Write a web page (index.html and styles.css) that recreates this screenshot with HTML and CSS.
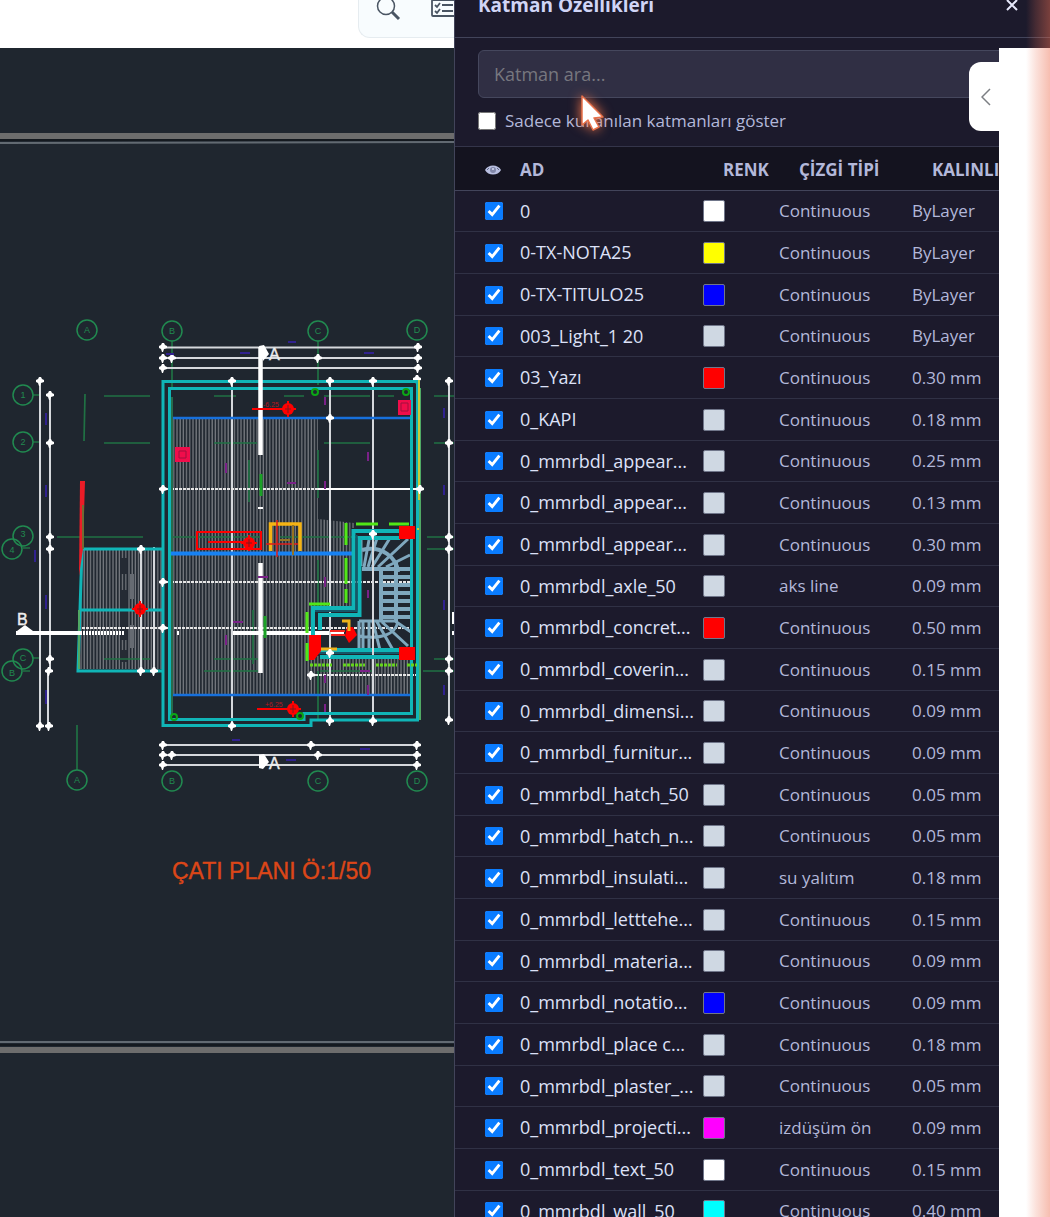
FILE: index.html
```html
<!DOCTYPE html>
<html lang="tr">
<head>
<meta charset="utf-8">
<meta name="viewport" content="width=device-width, initial-scale=1">
<title>Katman Özellikleri</title>
<link rel="stylesheet" href="styles.css">
</head>
<body>
<div class="app">
  <main class="workspace">
    <header class="toolbar">
      <div class="toolbar-group">
        <button class="tool" type="button" aria-label="Ara">
          <svg width="26" height="26" viewBox="0 0 26 26" fill="none" stroke="#4a5563" stroke-width="2"><circle cx="10" cy="9" r="8.5" stroke-width="1.5"/><path d="M16 15l7 7" stroke-width="3"/></svg>
        </button>
        <button class="tool" type="button" aria-label="Katman listesi">
          <svg width="26" height="26" viewBox="0 0 26 26" fill="none" stroke="#4a5563" stroke-width="1.8"><rect x="2" y="3" width="24" height="16" rx="1"/><path d="M5 8l2 2 3-4M12 8h11M5 14l2 2 3-4M12 14h11"/></svg>
        </button>
      </div>
    </header>
    <div class="canvas">
      <svg class="drawing" viewBox="0 48 454 1169" preserveAspectRatio="xMinYMin slice" role="img" aria-label="Çatı planı">
        <defs>
          <pattern id="hatch" width="3.2" height="8" patternUnits="userSpaceOnUse"><path d="M1 0V8" stroke="#777b80" stroke-width="1.3"/></pattern>
          <path id="tick" d="M-4 -1l2-1 1-2h2l1 2 2 1v2l-3 1-1 3h-1l-1-3-2-1z" fill="#fff"/>
          <g id="level"><circle r="6" fill="#f00"/><path d="M-8 0H8M0-8V8" stroke="#f00" stroke-width="2"/><path d="M-3 0H3M0-4V4" stroke="#7b1a20"/></g>
        </defs>

        <!-- sheet frame -->
        <path d="M0 136H454M0 1050H454" stroke="#6d6d6d" stroke-width="6"/>
        <path d="M0 140H454M0 1045H454" stroke="#14191f" stroke-width="2"/>
        <path d="M0 143L454 142M0 1042H454" stroke="#626a72" stroke-width="2"/>

        <!-- hatching -->
        <path d="M171 419H318V519L354 523V553H411V695H171zM82 550H162V669H80z" fill="url(#hatch)"/>
        <path d="M352 528H412V656H312V608H352z" fill="#1f262f"/>
        <path d="M124 558v16M124 590v50M124 650v12" stroke="#252b34" stroke-width="7"/>
        <path d="M132 574v25M132 625v23" stroke="#666b72" stroke-width="4"/>

        <!-- grid axes -->
        <g stroke="#207144" stroke-width="1.7" fill="none">
          <path d="M33 395h6M33 442h6M23 548h7M33 658h6M23 671h7"/>
          <path d="M104 396h46M104 443h46M57 537h86M104 659h46M214 396h22M214 443h43M284 396h20M324 396h46M378 396h16M324 443h46M434 396h20M434 443h20M427 537h27M427 549h27M434 659h20M423 671h31M172 537h88M280 537h80M204 671h46M214 659h44M320 671h52"/>
          <path d="M85 394l-1 47M77 725v45M172 341v46M318 341v44M172 470v100M249 460v42M318 450v48M318 560v48M172 671v45M318 671v48M253 610v54M248 671h10"/>
        </g>
        <g stroke="#218a50" stroke-width="1.5" fill="none">
          <circle cx="87" cy="330" r="10"/><circle cx="172" cy="331" r="10"/><circle cx="318" cy="331" r="10"/><circle cx="417" cy="330" r="10"/>
          <circle cx="23" cy="395" r="10"/><circle cx="23" cy="442" r="10"/><circle cx="23" cy="536" r="10"/><circle cx="12" cy="549" r="10"/><circle cx="23" cy="659" r="10"/><circle cx="12" cy="671" r="10"/>
          <circle cx="77" cy="780" r="10"/><circle cx="172" cy="781" r="10"/><circle cx="318" cy="781" r="10"/><circle cx="417" cy="781" r="10"/>
        </g>
        <g class="axis-name">
          <text x="87" y="333">A</text><text x="172" y="334">B</text><text x="318" y="334">C</text><text x="417" y="333">D</text>
          <text x="23" y="398">1</text><text x="23" y="445">2</text><text x="23" y="537">3</text><text x="12" y="553">4</text><text x="23" y="661">C</text><text x="12" y="676">B</text>
          <text x="77" y="783">A</text><text x="172" y="784">B</text><text x="318" y="784">C</text><text x="417" y="784">D</text>
        </g>

        <!-- dimension chains -->
        <g stroke="#d5d8dc" stroke-width="2" fill="none">
          <path d="M162 347.500H420M162 358H420M162 368H420M162 745H420M162 755H420M162 765H420"/>
          <path d="M40 381V727M50 395V671M48 671V727M449 381V720"/>
          <path d="M232 381V726M330 381V722M373 381V722M141 547V672M154 547V672"/>
        </g>
        <path d="M163 489H318M163 582H411M78 628H411M311 675H420" stroke="#e6e6e6" stroke-width="2" stroke-dasharray="3 1"/>
        <path d="M318 489H420" stroke="#fff" stroke-width="2"/>
        <g>
          <use href="#tick" x="163" y="347"/><use href="#tick" x="163" y="358"/><use href="#tick" x="172" y="358"/><use href="#tick" x="163" y="368"/>
          <use href="#tick" x="418" y="347"/><use href="#tick" x="418" y="358"/><use href="#tick" x="418" y="368"/><use href="#tick" x="318" y="358"/><use href="#tick" x="417" y="379"/>
          <use href="#tick" x="163" y="745"/><use href="#tick" x="163" y="755"/><use href="#tick" x="172" y="755"/><use href="#tick" x="163" y="765"/>
          <use href="#tick" x="311" y="745"/><use href="#tick" x="318" y="755"/><use href="#tick" x="417" y="745"/><use href="#tick" x="417" y="755"/><use href="#tick" x="417" y="765"/>
          <use href="#tick" x="40" y="381"/><use href="#tick" x="50" y="395"/><use href="#tick" x="50" y="443"/><use href="#tick" x="50" y="537"/><use href="#tick" x="50" y="549"/><use href="#tick" x="50" y="659"/><use href="#tick" x="49" y="671"/><use href="#tick" x="40" y="726"/><use href="#tick" x="49" y="726"/>
          <use href="#tick" x="449" y="381"/><use href="#tick" x="449" y="443"/><use href="#tick" x="449" y="537"/><use href="#tick" x="449" y="549"/><use href="#tick" x="449" y="659"/><use href="#tick" x="449" y="671"/><use href="#tick" x="449" y="720"/>
        </g>
        <g stroke="#30218f" stroke-width="2"><path d="M46 413v12M46 485v12M46 595v14M46 690v14M35 550v12M444 408v10M444 485v10M444 600v10M444 685v10M240 353h10M288 342h8M364 353h10M166 354h8M232 740h8M286 760h10M360 749h10"/></g>

        <!-- roof ridges -->
        <path d="M171 418H411M171 695H411" stroke="#1770dc" stroke-width="2.500"/>
        <path d="M171 553.500H352" stroke="#1682f4" stroke-width="4"/>

        <!-- walls -->
        <g fill="none" stroke="#10b5b7" stroke-width="3">
          <path d="M163 381.500H417.500V720H311V725.500H163z"/>
          <path d="M169.500 388.500H411.500V713.500H304V719.500H169.500z"/>
          <path d="M162 549H82L78 671H162M81 610H162"/>
        </g>
        <path d="M172 397V550M172 560V716" stroke="#276b4c" stroke-width="2"/>
        <path d="M79 610V669M420 388V720" stroke="#50a965" stroke-width="2"/>
        <path d="M419 380V500M418 528V578M418 608V660" stroke="#c9ca38" stroke-width="2"/>
        <path d="M80 481h5l-2 68-4 27z" fill="#ea1c27"/>
        <path d="M83 505V549" stroke="#716a33" stroke-width="2"/>

        <!-- section marks -->
        <path d="M260.500 347V455M260.500 563V673" stroke="#fff" stroke-width="4.500"/>
        <path d="M16 633H80M233 633H344" stroke="#fff" stroke-width="4"/>
        <path d="M80 633H125" stroke="#fff" stroke-width="4" stroke-dasharray="2 1"/>
        <path d="M258 508h5M178 631v4M453 612v12M453 631v4" stroke="#fff" stroke-width="2"/>
        <path d="M259 346l5-1 5 9-6 7zM259 755l5-1 5 8-6 7-4-1zM17 631l8-6 8 6z" fill="#fff"/>
        <g class="section-name"><text x="269" y="360">A</text><text x="269" y="769">A</text><text x="17" y="625">B</text></g>
        <path d="M261 474v22M265 616v22" stroke="#1ba126" stroke-width="3"/>

        <!-- annotations -->
        <g stroke="#7a2188" stroke-width="2"><path d="M226 463v10M325 397v8M368 452v9M287 483h9M325 481v8M258 577h10M325 577v10M368 590v8M233 622h10M226 635v10M325 675v8M325 704v8M368 685v10M360 671h10M383 577h9"/></g>
        <g fill="none" stroke="#f00" stroke-width="2">
          <path d="M252 409H282M257 709H293M197 532H261V549H197zM208 542H250M134 608H145"/>
        </g>
        <use href="#level" x="288" y="409"/><use href="#level" x="293" y="709"/><use href="#level" x="249" y="543"/><use href="#level" x="140" y="609"/>
        <g class="level-name"><text x="263" y="407">-6.25</text><text x="265" y="707">+6.25</text></g>
        <path d="M175 447h15v15h-15zM398 400h13v15h-13z" fill="#f00d4b"/>
        <path d="M179 451h7v7h-7zM401 403h7v8h-7z" fill="none" stroke="#a0103f"/>
        <path d="M270.500 551V524H300V551" stroke="#f5b313" stroke-width="3.500" fill="none"/>
        <path d="M277 520V557M266 544H298" stroke="#e11d18" stroke-width="1.500"/>
        <path d="M280 540h10M293 525v30" stroke="#967322" stroke-width="2"/>
        <g fill="none" stroke="#0ba615" stroke-width="2"><circle cx="315" cy="392" r="3"/><circle cx="406" cy="392" r="3"/><circle cx="174" cy="717" r="3"/><circle cx="300" cy="716" r="3"/></g>

        <!-- staircase -->
        <g stroke="#7fa8be" stroke-width="4" fill="none">
          <path d="M362 569H410M381 569V620M396 562V622M362 550C382 545 397 558 398 572M381 577H410M381 585H410M381 593H410M381 601H410M381 609H410M381 617H410"/>
          <path d="M364 567L369 540M368 567L377 538M372 567L390 538M378 567L408 539M386 567L410 555M361 540V566" stroke-width="3"/>
          <path d="M359 621H395L411 632M359 621V650M363 622V650M369 622V650M373 622L380 650M377 622L393 650M382 622L408 646M359 636C382 640 395 634 398 622" stroke-width="3"/>
        </g>
        <g fill="none" stroke="#10b5b7">
          <path d="M400 531H353.500V608H313V640M400 538H359.500V615H320V630" stroke-width="4"/>
          <path d="M315 650H404M320 657H404" stroke-width="4"/>
          <path d="M356.500 535V611M315 611H357M316 653H400" stroke="#155769" stroke-width="2"/>
          <path d="M411.500 530V660M417.500 530V660" stroke-width="3"/>
        </g>
        <path d="M373 530V655M330 628V655" stroke="#d5d8dc" stroke-width="2"/>
        <path d="M346 523V545M346 558V584M346 589V603M356 524H378M389 524H409M309 604H330M307 612V633M307 643V661" stroke="#51e717" stroke-width="3"/>
        <path d="M310 665H332M343 665H365M376 665H397M407 665H417" stroke="#65d51c" stroke-width="3" stroke-dasharray="3 1"/>
        <path d="M399 526h16v13h-16zM399 647h16v13h-16zM309 635h12v16l-7 9h-5zM347 627h6l4 8-8 8-4-7z" fill="#f00"/>
        <path d="M330 631H345M331 635H345" stroke="#f42620" stroke-width="2"/>
        <path d="M342 621h7v10M321 649h16" stroke="#edb21b" stroke-width="3" fill="none"/>
        <g><use href="#tick" x="232" y="381"/><use href="#tick" x="330" y="381"/><use href="#tick" x="373" y="381"/><use href="#tick" x="163" y="489"/><use href="#tick" x="420" y="489"/><use href="#tick" x="330" y="418"/><use href="#tick" x="163" y="582"/><use href="#tick" x="163" y="628"/><use href="#tick" x="232" y="726"/><use href="#tick" x="330" y="721"/><use href="#tick" x="373" y="721"/><use href="#tick" x="373" y="534"/><use href="#tick" x="330" y="653"/><use href="#tick" x="311" y="675"/><use href="#tick" x="141" y="549"/><use href="#tick" x="141" y="671"/><use href="#tick" x="154" y="671"/></g>

        <text class="plan-title" x="172" y="879">ÇATI PLANI Ö:1/50</text>
      </svg>
    </div>
  </main>

  <aside class="panel">
    <header class="panel-header">
      <h2>Katman Özellikleri</h2>
      <button class="close" type="button" aria-label="Kapat"><svg width="12" height="12" viewBox="0 0 12 12" stroke="#e6e8fb" stroke-width="2"><path d="M1 1l10 10M11 1L1 11"/></svg></button>
    </header>
    <div class="filters">
      <input class="search" type="text" placeholder="Katman ara..." aria-label="Katman ara">
      <label class="only-used"><input type="checkbox">Sadece kullanılan katmanları göster</label>
    </div>
    <table class="layers">
      <colgroup><col class="c-visible"><col class="c-name"><col class="c-color"><col class="c-type"><col class="c-weight"></colgroup>
      <thead><tr>
        <th scope="col"><svg class="eye" width="16" height="10" viewBox="0 0 16 10" role="img" aria-label="Görünür"><path d="M0 5C3-1 13-1 16 5 13 11 3 11 0 5z" fill="#b9bfe0"/><circle cx="8" cy="5" r="3" fill="#8187a8"/><circle cx="8" cy="4" r="1" fill="#d8dcf4"/><path d="M2 5l2-2M14 5l-2-2" stroke="#62678a"/></svg></th>
        <th scope="col">AD</th><th scope="col" class="inset">RENK</th><th scope="col" class="inset">ÇİZGİ TİPİ</th><th scope="col" class="inset">KALINLIK</th>
      </tr></thead>
      <tbody>
        <tr><td><input type="checkbox" id="l1" checked></td><td><label for="l1">0</label></td><td><span class="swatch white"></span></td><td>Continuous</td><td>ByLayer</td></tr>
        <tr><td><input type="checkbox" id="l2" checked></td><td><label for="l2">0-TX-NOTA25</label></td><td><span class="swatch yellow"></span></td><td>Continuous</td><td>ByLayer</td></tr>
        <tr><td><input type="checkbox" id="l3" checked></td><td><label for="l3">0-TX-TITULO25</label></td><td><span class="swatch blue"></span></td><td>Continuous</td><td>ByLayer</td></tr>
        <tr><td><input type="checkbox" id="l4" checked></td><td><label for="l4">003_Light_1 20</label></td><td><span class="swatch"></span></td><td>Continuous</td><td>ByLayer</td></tr>
        <tr><td><input type="checkbox" id="l5" checked></td><td><label for="l5">03_Yazı</label></td><td><span class="swatch red"></span></td><td>Continuous</td><td>0.30 mm</td></tr>
        <tr><td><input type="checkbox" id="l6" checked></td><td><label for="l6">0_KAPI</label></td><td><span class="swatch"></span></td><td>Continuous</td><td>0.18 mm</td></tr>
        <tr><td><input type="checkbox" id="l7" checked></td><td><label for="l7">0_mmrbdl_appear...</label></td><td><span class="swatch"></span></td><td>Continuous</td><td>0.25 mm</td></tr>
        <tr><td><input type="checkbox" id="l8" checked></td><td><label for="l8">0_mmrbdl_appear...</label></td><td><span class="swatch"></span></td><td>Continuous</td><td>0.13 mm</td></tr>
        <tr><td><input type="checkbox" id="l9" checked></td><td><label for="l9">0_mmrbdl_appear...</label></td><td><span class="swatch"></span></td><td>Continuous</td><td>0.30 mm</td></tr>
        <tr><td><input type="checkbox" id="l10" checked></td><td><label for="l10">0_mmrbdl_axle_50</label></td><td><span class="swatch"></span></td><td>aks line</td><td>0.09 mm</td></tr>
        <tr><td><input type="checkbox" id="l11" checked></td><td><label for="l11">0_mmrbdl_concret...</label></td><td><span class="swatch red"></span></td><td>Continuous</td><td>0.50 mm</td></tr>
        <tr><td><input type="checkbox" id="l12" checked></td><td><label for="l12">0_mmrbdl_coverin...</label></td><td><span class="swatch"></span></td><td>Continuous</td><td>0.15 mm</td></tr>
        <tr><td><input type="checkbox" id="l13" checked></td><td><label for="l13">0_mmrbdl_dimensi...</label></td><td><span class="swatch"></span></td><td>Continuous</td><td>0.09 mm</td></tr>
        <tr><td><input type="checkbox" id="l14" checked></td><td><label for="l14">0_mmrbdl_furnitur...</label></td><td><span class="swatch"></span></td><td>Continuous</td><td>0.09 mm</td></tr>
        <tr><td><input type="checkbox" id="l15" checked></td><td><label for="l15">0_mmrbdl_hatch_50</label></td><td><span class="swatch"></span></td><td>Continuous</td><td>0.05 mm</td></tr>
        <tr><td><input type="checkbox" id="l16" checked></td><td><label for="l16">0_mmrbdl_hatch_n...</label></td><td><span class="swatch"></span></td><td>Continuous</td><td>0.05 mm</td></tr>
        <tr><td><input type="checkbox" id="l17" checked></td><td><label for="l17">0_mmrbdl_insulati...</label></td><td><span class="swatch"></span></td><td>su yalıtım</td><td>0.18 mm</td></tr>
        <tr><td><input type="checkbox" id="l18" checked></td><td><label for="l18">0_mmrbdl_letttehe...</label></td><td><span class="swatch"></span></td><td>Continuous</td><td>0.15 mm</td></tr>
        <tr><td><input type="checkbox" id="l19" checked></td><td><label for="l19">0_mmrbdl_materia...</label></td><td><span class="swatch"></span></td><td>Continuous</td><td>0.09 mm</td></tr>
        <tr><td><input type="checkbox" id="l20" checked></td><td><label for="l20">0_mmrbdl_notatio...</label></td><td><span class="swatch blue"></span></td><td>Continuous</td><td>0.09 mm</td></tr>
        <tr><td><input type="checkbox" id="l21" checked></td><td><label for="l21">0_mmrbdl_place c...</label></td><td><span class="swatch"></span></td><td>Continuous</td><td>0.18 mm</td></tr>
        <tr><td><input type="checkbox" id="l22" checked></td><td><label for="l22">0_mmrbdl_plaster_...</label></td><td><span class="swatch"></span></td><td>Continuous</td><td>0.05 mm</td></tr>
        <tr><td><input type="checkbox" id="l23" checked></td><td><label for="l23">0_mmrbdl_projecti...</label></td><td><span class="swatch magenta"></span></td><td>izdüşüm ön</td><td>0.09 mm</td></tr>
        <tr><td><input type="checkbox" id="l24" checked></td><td><label for="l24">0_mmrbdl_text_50</label></td><td><span class="swatch white"></span></td><td>Continuous</td><td>0.15 mm</td></tr>
        <tr><td><input type="checkbox" id="l25" checked></td><td><label for="l25">0_mmrbdl_wall_50</label></td><td><span class="swatch cyan"></span></td><td>Continuous</td><td>0.40 mm</td></tr>
      </tbody>
    </table>
    <svg class="cursor" width="36" height="44" viewBox="0 0 36 44" aria-hidden="true"><path d="M6 4v29l6-5 5 10 6-3-5-9 9-1z" fill="#fff" stroke="#e8714a" stroke-width="1.500" stroke-linejoin="round"/></svg>
  </aside>

  <div class="side-rail">
    <button class="expand" type="button" aria-label="Paneli aç"><svg width="10" height="18" viewBox="0 0 10 18" fill="none" stroke="#7c7f83" stroke-width="1.500"><path d="M9 1L1 9l8 8"/></svg></button>
  </div>
  <div class="edge-glow"></div>
</div>
</body>
</html>
```
FILE: styles.css
```css
* { box-sizing: border-box; }
body {
  margin: 0;
  font-family: "Open Sans", "Noto Sans", sans-serif;
  background: #1f262f;
}
button { padding: 0; border: 0; background: none; font: inherit; }
svg { display: block; }

.app {
  position: relative;
  display: flex;
  height: 100vh;
  overflow: hidden;
}

/* drawing area */
.workspace {
  flex: 1;
  min-width: 0;
  display: flex;
  flex-direction: column;
}
.toolbar {
  display: flex;
  justify-content: flex-end;
  height: 48px;
  background: #fff;
}
.toolbar-group {
  display: flex;
  gap: 28px;
  width: 96px;
  height: 38px;
  padding-left: 17px;
  overflow: hidden;
  background: #f8fcfe;
  border: solid #e6ecf0;
  border-width: 0 0 1px 1px;
  border-radius: 0 0 0 12px;
}
.tool { flex: none; height: 20px; display: flex; align-items: center; }
.canvas { flex: 1; min-height: 0; background: #1f262f; }
.drawing { width: 100%; height: 100%; }
.axis-name {
  font: 9px "Liberation Sans", sans-serif;
  fill: #218a50;
  text-anchor: middle;
}
.section-name { font: 16px "Liberation Sans", sans-serif; fill: #eee; stroke: #eee; stroke-width: .4px; }
.level-name { font: 7px "Liberation Sans", sans-serif; fill: #b51820; }
.plan-title { font: 23px "Liberation Sans", sans-serif; fill: #dc4618; stroke: #dc4618; stroke-width: .4px; }

/* layer panel */
.panel {
  position: relative;
  flex: none;
  width: 596px;
  border-left: 1px solid #42445a;
  background: #1c1a2c;
  color: #b3b8da;
}
.panel-header {
  display: flex;
  align-items: center;
  justify-content: space-between;
  height: 66px;
  margin-top: -28px;
  padding: 0 32px 0 23px;
  border-bottom: 1px solid #42445a;
}
.panel-header h2 { margin: 0; font-size: 19px; line-height: 26px; color: #d0d5f6; }
.filters {
  display: flex;
  flex-direction: column;
  gap: 11px;
  height: 109px;
  padding: 12px 23px 0;
  border-bottom: 1px solid #34354a;
}
.search {
  width: 100%;
  height: 48px;
  padding: 0 15px;
  border: 1px solid #45475d;
  border-radius: 6px;
  background: #302f44;
  color: #d0d5f6;
  font: 18px "Open Sans", "Noto Sans", sans-serif;
}
.search::placeholder { color: #77777f; opacity: 1; }
.only-used { display: flex; align-items: center; gap: 9px; font-size: 17px; line-height: 24px; }
input[type="checkbox"] { width: 18px; height: 18px; margin: 0; accent-color: #0a7cff; }

.layers {
  width: 100%;
  table-layout: fixed;
  border-collapse: separate;
  border-spacing: 0;
}
.c-visible { width: 65px; }
.c-name { width: 183px; }
.c-color { width: 76px; }
.c-type { width: 133px; }
.layers th {
  height: 44px;
  padding: 2px 0 0;
  background: #14131f;
  border-bottom: 1px solid #42445a;
  font-size: 17px;
  line-height: 24px;
  text-align: left;
  white-space: nowrap;
}
.layers th.inset { padding-left: 20px; }
.eye { margin-left: 30px; }
.layers td {
  height: 42px;
  padding: 0;
  border-bottom: 1px solid #303145;
  font-size: 17px;
  line-height: 24px;
  white-space: nowrap;
}
.layers tr:nth-child(3n+1) td { height: 41px; }
.layers td input { display: block; margin-left: 30px; }
.layers label { font-size: 18px; color: #dde1f8; }
.swatch {
  display: block;
  width: 22px;
  height: 22px;
  border: 1px solid #70768a;
  border-radius: 2px;
  background: #cfd8e3;
}
.white { background: #fff; }
.yellow { background: #ff0; }
.blue { background: #00f; }
.red { background: #f00; }
.magenta { background: #f0f; }
.cyan { background: #0ff; }

.cursor {
  position: absolute;
  left: 121px;
  top: 92px;
  filter: drop-shadow(0 0 6px #ff7a4a);
}

/* collapsed rail lying over the panel */
.side-rail {
  position: absolute;
  top: 48px;
  right: 0;
  bottom: 0;
  width: 51px;
  background: #fff;
}
.expand {
  position: absolute;
  right: 51px;
  top: 14px;
  display: flex;
  align-items: center;
  justify-content: center;
  width: 30px;
  height: 69px;
  padding-left: 4px;
  border-radius: 12px 0 0 12px;
  background: #fff;
}
.edge-glow {
  position: absolute;
  top: 0;
  right: 0;
  bottom: 0;
  width: 24px;
  background: linear-gradient(to right, rgba(236, 110, 80, 0), rgba(236, 110, 80, .2) 40%, rgba(236, 110, 80, .45));
  pointer-events: none;
}
```
